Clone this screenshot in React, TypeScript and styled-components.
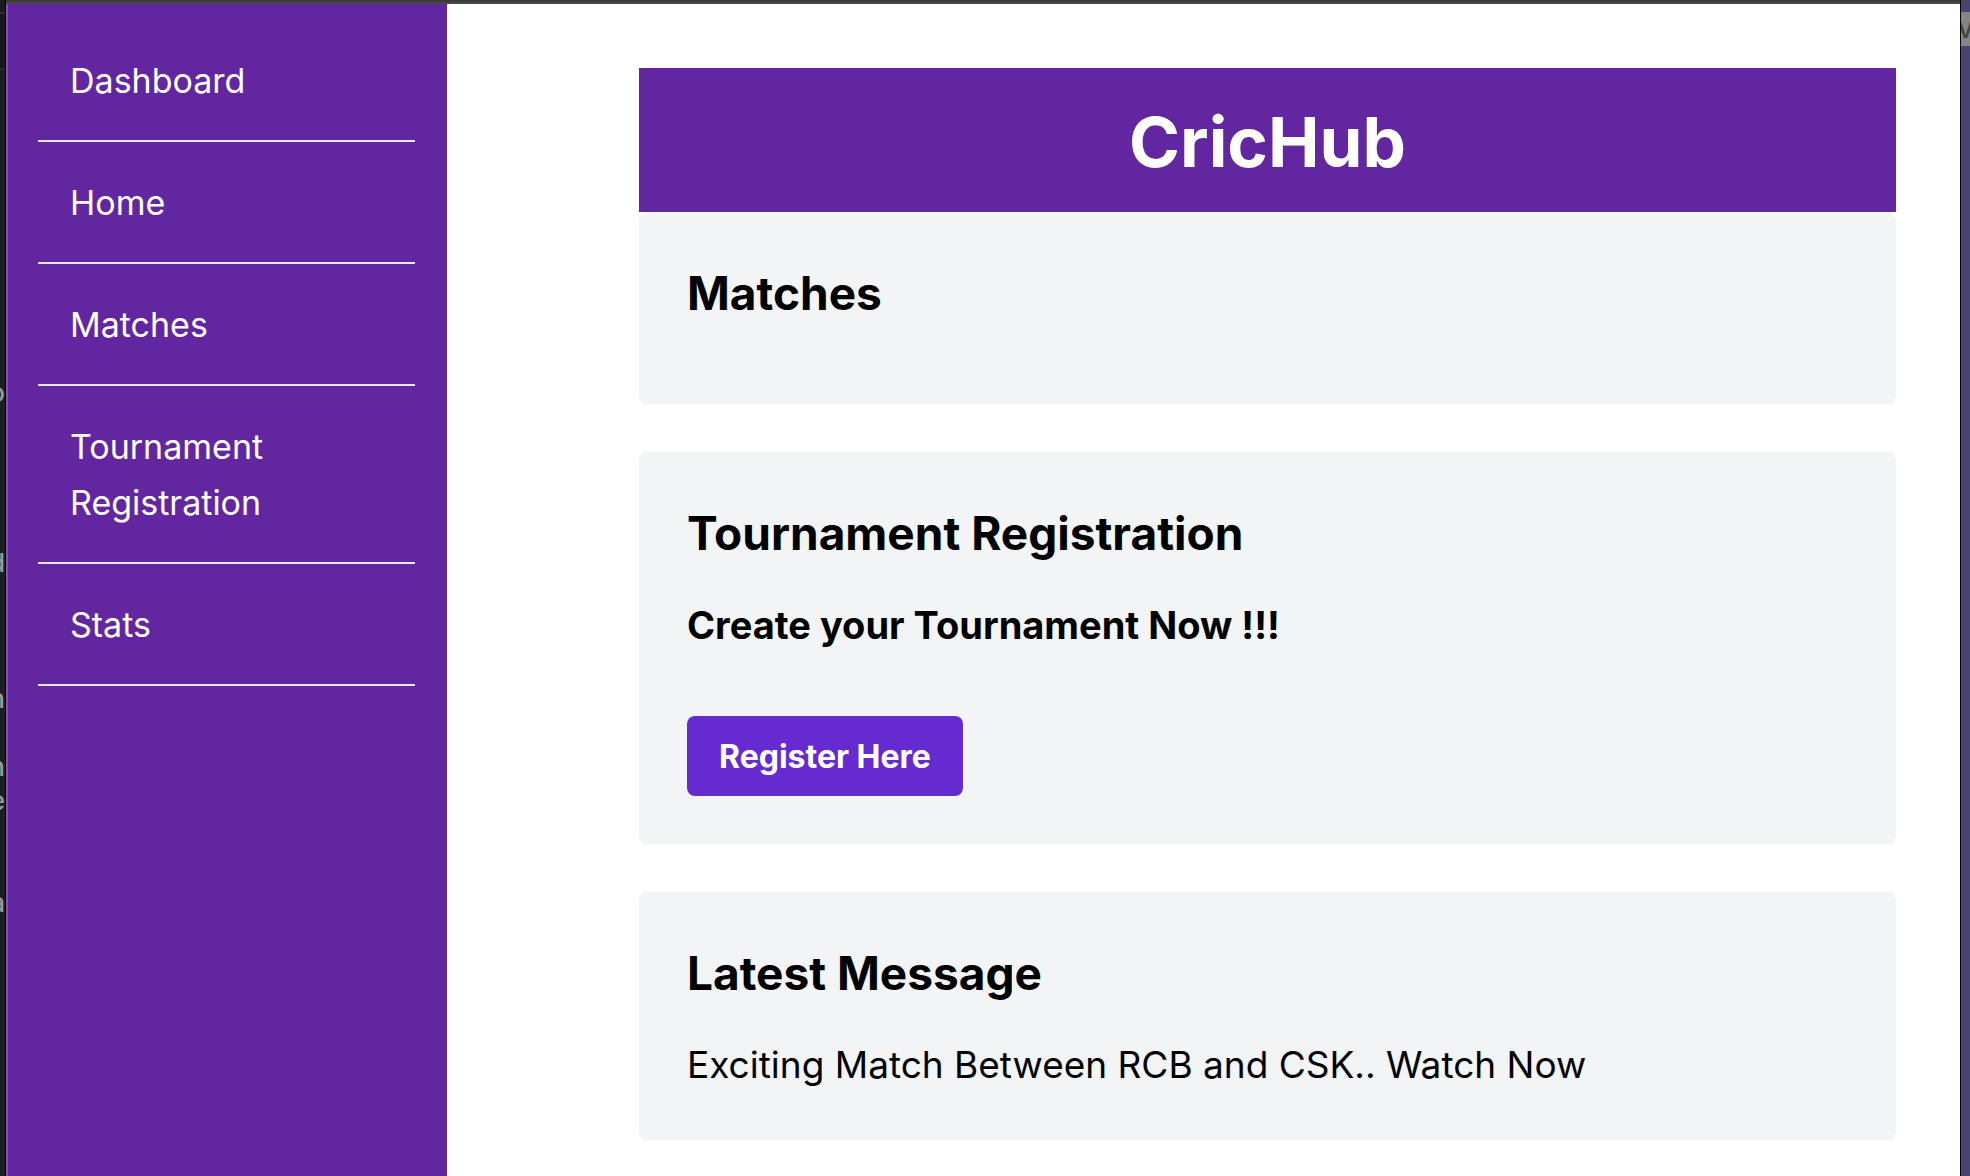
import React from "react";
import styled, { createGlobalStyle } from "styled-components";

const purple = "#6226a0";

const GlobalStyle = createGlobalStyle`
  *, *::before, *::after { box-sizing: border-box; }
  body {
    margin: 0;
    background: #fff;
    color: #000;
    font-family: Inter, "Liberation Sans", sans-serif;
  }
  h1, h2, p, ul { margin: 0; padding: 0; }
`;

const Desktop = styled.div`
  display: grid;
  grid-template-columns: 6px minmax(0, 1fr) 10px;
  height: 100vh;
  overflow: hidden;
`;

const EditorEdge = styled.div`
  display: flex;
  flex-direction: column;
  overflow: hidden;
  background: #1c1e20;
  border-right: 1px solid #000;
`;

const EditorTitle = styled.div`
  flex: none;
  height: 14px;
  background: #1a1a1f;
  border-bottom: 2px solid #2c2d31;
`;

const EditorTabs = styled.div`
  flex: none;
  height: 56px;
  background: #17171c;
  border-bottom: 2px solid #2c2d31;
`;

const EditorCode = styled.div`
  display: grid;
  grid-auto-rows: 34px;
  justify-content: end;
  justify-items: end;
  color: #98999b;
  font-size: 26px;
  line-height: 34px;
  font-weight: 500;
`;

const CodeLine = styled.span<{ $row: number }>`
  grid-row: ${({ $row }) => $row};
`;

const WallpaperEdge = styled.div`
  overflow: hidden;
  padding-top: 12px;
  background: #474474;
  border-left: 1px solid #000;
`;

const DesktopLabel = styled.div`
  display: flex;
  justify-content: center;
  height: 34px;
  overflow: hidden;
  background: #858585;
  color: #444;
  font-size: 24px;
  line-height: 36px;
  font-weight: 500;
`;

const Window = styled.div`
  display: flex;
  flex-direction: column;
  min-height: 0;
  background: #fff;
`;

const WindowBar = styled.div`
  flex: none;
  height: 4px;
  background: #3c3c3c;
  border-bottom: 2px solid #484848;
`;

const Page = styled.div`
  flex: 1;
  display: flex;
  min-height: 0;
`;

const Sidebar = styled.nav`
  flex: none;
  width: 441px;
  padding: 16px 32px 16px 30px;
  background: ${purple};
  border-left: 2px solid #8550b2;
`;

const NavList = styled.ul`
  list-style: none;
`;

const NavItem = styled.li`
  border-bottom: 2px solid #e5e7eb;
`;

const NavLink = styled.a`
  display: block;
  padding: 33px 32px 31px;
  color: #fff;
  font-size: 34px;
  line-height: 56px;
  text-decoration: none;
`;

const Main = styled.main`
  flex: 1;
  min-width: 0;
  padding: 64px 64px 32px 192px;
`;

const Banner = styled.header`
  padding: 36px 32px 32px;
  background: ${purple};
  color: #fff;
  text-align: center;
`;

const Brand = styled.h1`
  font-size: 69px;
  line-height: 76px;
  font-weight: 700;
`;

const Cards = styled.div`
  display: grid;
  gap: 48px;
`;

const Card = styled.section`
  padding: 50px 48px 48px;
  background: #f3f4f6;
  border-radius: 8px;
`;

const CardTitle = styled.h2`
  margin-bottom: 32px;
  font-size: 46px;
  line-height: 62px;
  font-weight: 700;
`;

const CardText = styled.p<{ $strong?: boolean }>`
  padding-top: 2px;
  font-size: ${({ $strong }) => ($strong ? 38 : 37)}px;
  line-height: 54px;
  font-weight: ${({ $strong }) => ($strong ? 700 : 400)};
`;

const RegisterButton = styled.button`
  display: block;
  margin-top: 64px;
  padding: 17px 32px 15px;
  border: 0;
  border-radius: 8px;
  background: #652bd1;
  color: #fff;
  font-family: inherit;
  font-size: 32px;
  line-height: 48px;
  font-weight: 700;
`;

const codeLines = [
  { row: 10, text: "o" },
  { row: 15, text: "d" },
  { row: 19, text: "n" },
  { row: 21, text: "n" },
  { row: 22, text: "e" },
  { row: 25, text: "a" },
];

const navItems = ["Dashboard", "Home", "Matches", "Tournament Registration", "Stats"];

export default function App() {
  return (
    <>
      <GlobalStyle />
      <Desktop>
        <EditorEdge>
          <EditorTitle />
          <EditorTabs />
          <EditorCode>
            {codeLines.map((line) => (
              <CodeLine key={line.row} $row={line.row}>
                {line.text}
              </CodeLine>
            ))}
          </EditorCode>
        </EditorEdge>
        <Window>
          <WindowBar />
          <Page>
            <Sidebar>
              <NavList>
                {navItems.map((item) => (
                  <NavItem key={item}>
                    <NavLink href="#">{item}</NavLink>
                  </NavItem>
                ))}
              </NavList>
            </Sidebar>
            <Main>
              <Banner>
                <Brand>CricHub</Brand>
              </Banner>
              <Cards>
                <Card>
                  <CardTitle>Matches</CardTitle>
                </Card>
                <Card>
                  <CardTitle>Tournament Registration</CardTitle>
                  <CardText $strong>Create your Tournament Now !!!</CardText>
                  <RegisterButton type="button">Register Here</RegisterButton>
                </Card>
                <Card>
                  <CardTitle>Latest Message</CardTitle>
                  <CardText>Exciting Match Between RCB and CSK.. Watch Now</CardText>
                </Card>
              </Cards>
            </Main>
          </Page>
        </Window>
        <WallpaperEdge>
          <DesktopLabel>V</DesktopLabel>
        </WallpaperEdge>
      </Desktop>
    </>
  );
}
